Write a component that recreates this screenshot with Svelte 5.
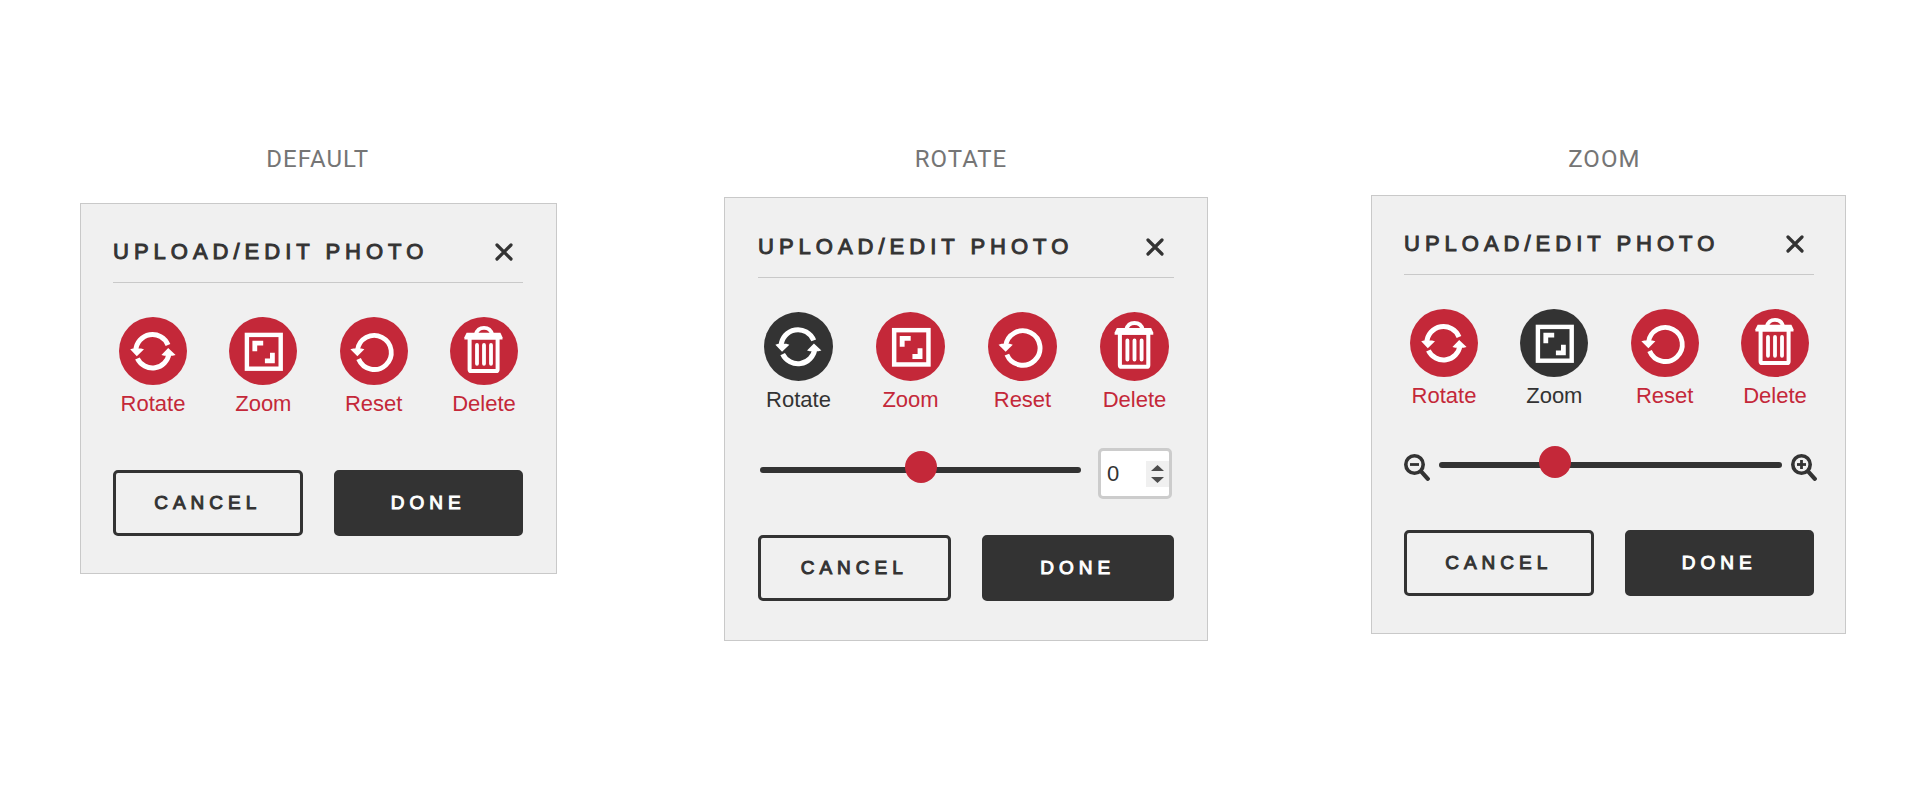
<script>
  const tools = [
    { id: 'rotate', label: 'Rotate' },
    { id: 'zoom', label: 'Zoom' },
    { id: 'reset', label: 'Reset' },
    { id: 'delete', label: 'Delete' }
  ];

  const panels = [
    { id: 'default', label: 'DEFAULT' },
    { id: 'rotate', label: 'ROTATE' },
    { id: 'zoom', label: 'ZOOM' }
  ];

  let angle = $state(0);
  let scale = $state(32);

  function turn(step) {
    angle = Math.max(-180, Math.min(180, Number(angle) + step));
  }
</script>

{#snippet toolIcon(id)}
  <svg class="dial" viewBox="0 0 68 68" aria-hidden="true">
    <circle cx="34" cy="34" r="34" fill="currentColor" />
    {#if id === 'rotate'}
      <g fill="none" stroke="#fff" stroke-width="5">
        <path d="M16.8 33.5A16.7 16.7 0 0 1 49 28" />
        <path d="M18.4 41.5A16.7 16.7 0 0 0 50 36.5" />
      </g>
      <path fill="#fff" d="M11.2 32.2L14 31.4H22L25 32.2L17.8 39.2ZM42.4 38L49.2 31L56.6 38L53.6 38.8H45.2Z" />
    {:else if id === 'zoom'}
      <rect x="17.9" y="17.9" width="33.8" height="33.8" fill="none" stroke="#fff" stroke-width="4.4" />
      <path fill="#fff" d="M23.4 23.7H34.2V28.4H28.2V34.2H23.4ZM45.8 35.7V46.2H35.9V41.5H41V35.7Z" />
    {:else if id === 'reset'}
      <path d="M18.6 42A17 17 0 1 0 17.4 33.5" fill="none" stroke="#fff" stroke-width="4.8" />
      <path fill="#fff" d="M10.4 32.2L13.4 31.4H21.4L24.4 32.2L17.4 39.2Z" />
    {:else}
      <path d="M25.8 17.5C27 12.8 30 10.8 34 10.8S41 12.8 42.2 17.5" fill="none" stroke="#fff" stroke-width="3.8" />
      <path fill="#fff" d="M16.6 15.8H50.4L52.5 20.3V22.4H14.4V20.3Z" />
      <rect x="19.6" y="20.5" width="28" height="33.5" rx="1.6" fill="none" stroke="#fff" stroke-width="4" />
      <path d="M27 28V46.8M34 28V46.8M41 28V46.8" stroke="#fff" stroke-width="3.8" stroke-linecap="round" />
    {/if}
  </svg>
{/snippet}

{#snippet magnifier(plus)}
  <svg class="lens" viewBox="0 0 26 27" fill="none" stroke="currentColor" aria-hidden="true">
    <circle cx="10.5" cy="10.5" r="8.7" stroke-width="3.6" />
    <path d="M6 10.5H15" stroke-width="2.8" />
    {#if plus}<path d="M10.5 6V15" stroke-width="2.8" />{/if}
    <path d="M17.3 17.6L23.8 24.8" stroke-width="4.2" stroke-linecap="round" />
  </svg>
{/snippet}

<main>
  <div class="states">
    {#each panels as p}
      <h2 id="state-{p.id}">{p.label}</h2>
    {/each}
  </div>

  <div class="panels">
    {#each panels as p}
      <section class="panel {p.id}" aria-labelledby="state-{p.id}">
        <header>
          <h3>UPLOAD/EDIT PHOTO</h3>
          <button class="close" type="button" aria-label="Close">
            <svg viewBox="0 0 18 18" aria-hidden="true">
              <path d="M2 2L16 16M16 2L2 16" stroke="currentColor" stroke-width="3.2" stroke-linecap="round" />
            </svg>
          </button>
        </header>

        <div class="tools">
          {#each tools as t}
            <button class="tool" class:active={t.id === p.id} type="button">
              {@render toolIcon(t.id)}
              <span>{t.label}</span>
            </button>
          {/each}
        </div>

        {#if p.id === 'rotate'}
          <div class="adjust">
            <input type="range" min="-180" max="180" bind:value={angle} aria-label="Rotation" />
            <div class="stepper">
              <input type="number" min="-180" max="180" bind:value={angle} aria-label="Rotation in degrees" />
              <div class="spin">
                <button type="button" aria-label="Increase" onclick={() => turn(1)}>
                  <svg viewBox="0 0 13 6" aria-hidden="true"><path d="M0 6L6.5 0L13 6Z" fill="currentColor" /></svg>
                </button>
                <button type="button" aria-label="Decrease" onclick={() => turn(-1)}>
                  <svg viewBox="0 0 13 6" aria-hidden="true"><path d="M0 0H13L6.5 6Z" fill="currentColor" /></svg>
                </button>
              </div>
            </div>
          </div>
        {:else if p.id === 'zoom'}
          <div class="adjust">
            {@render magnifier(false)}
            <input type="range" min="0" max="100" bind:value={scale} aria-label="Zoom level" />
            {@render magnifier(true)}
          </div>
        {/if}

        <footer>
          <button class="action" type="button">CANCEL</button>
          <button class="action filled" type="button">DONE</button>
        </footer>
      </section>
    {/each}
  </div>
</main>

<style>
  :global(body) {
    margin: 0;
    background: #fff;
  }

  main {
    --red: #c42839;
    --dark: #333;
    --line: #c9c9c9;
    padding: 143px 0 40px;
    color: var(--dark);
    font-family: 'Liberation Sans', Arial, sans-serif;
  }

  h2,
  h3 {
    margin: 0;
  }

  button {
    margin: 0;
    padding: 0;
    border: 0;
    background: none;
    color: inherit;
    font: inherit;
    cursor: pointer;
  }

  svg {
    display: block;
  }

  .states {
    display: grid;
    grid-template-columns: repeat(3, 1fr);
    column-gap: 168px;
    padding: 0 78px 0 80px;
  }

  h2 {
    color: #757575;
    font: 400 24px/32px Roboto, sans-serif;
    letter-spacing: 1px;
    text-align: center;
  }

  .panels {
    display: grid;
    grid-template-columns: 477fr 167fr 484fr 163fr 475fr;
    align-items: start;
    padding: 20px 74px 0 80px;
  }

  .panel {
    --dial: 68px;
    box-sizing: border-box;
    padding: 32px 32px 37px;
    border: 1px solid var(--line);
    background: #f0f0f0;
  }

  .panel.default {
    grid-column: 1;
    margin-top: 8px;
    padding-right: 33px;
  }

  .panel.rotate {
    --dial: 69px;
    grid-column: 3;
    margin-top: 2px;
    padding: 33px 33px 39px;
  }

  .panel.zoom {
    grid-column: 5;
    padding-right: 31px;
  }

  header {
    display: flex;
    align-items: center;
    justify-content: space-between;
    padding: 0 10px 14px 0;
    border-bottom: 1px solid var(--line);
  }

  /* A thin outline on the regular face gives a medium weight. */
  h3,
  .action {
    font-weight: 400;
    letter-spacing: 5px;
    -webkit-text-stroke: 1px currentColor;
  }

  h3 {
    font-size: 22px;
    line-height: 32px;
    white-space: nowrap;
  }

  .close svg {
    width: 18px;
    height: 18px;
  }

  .tools {
    display: flex;
    justify-content: space-between;
    padding: 34px 5px 0 6px;
  }

  .tool {
    display: flex;
    flex-direction: column;
    align-items: center;
    gap: 5px;
    width: var(--dial);
    color: var(--red);
    font-size: 22px;
    line-height: 28px;
  }

  .tool.active {
    color: var(--dark);
  }

  .dial {
    width: var(--dial);
    height: var(--dial);
  }

  .adjust {
    display: flex;
  }

  .rotate .adjust {
    gap: 17px;
    padding: 34px 2px 0;
  }

  .zoom .adjust {
    align-items: center;
    gap: 9px;
    margin-right: -3px;
    padding-top: 36px;
  }

  .lens {
    flex: none;
    width: 26px;
    height: 27px;
    padding-top: 4px;
  }

  input[type='range'] {
    flex: 1;
    min-width: 0;
    height: 38px;
    margin: 0;
    appearance: none;
    background: none;
  }

  .rotate input[type='range'] {
    height: 44px;
  }

  input[type='range']::-webkit-slider-runnable-track {
    height: 6px;
    border-radius: 3px;
    background: var(--dark);
  }

  input[type='range']::-webkit-slider-thumb {
    width: 32px;
    height: 32px;
    margin-top: -16px;
    border-radius: 50%;
    appearance: none;
    background: var(--red);
  }

  .stepper {
    display: flex;
    align-items: center;
    box-sizing: border-box;
    width: 74px;
    height: 51px;
    border: 3px solid #ccc;
    border-radius: 5px;
    background: #fff;
  }

  input[type='number'] {
    flex: 1;
    min-width: 0;
    margin: 0;
    padding: 0 0 0 6px;
    border: 0;
    appearance: textfield;
    background: none;
    color: var(--dark);
    font: 22px/28px 'Liberation Sans', Arial, sans-serif;
  }

  input[type='number']::-webkit-inner-spin-button {
    display: none;
  }

  .spin {
    display: flex;
    flex-direction: column;
    gap: 6px;
    padding: 4px 5px;
    background: #f0f0f0;
    color: #4d4d4d;
  }

  .spin svg {
    width: 13px;
    height: 6px;
  }

  footer {
    display: grid;
    grid-template-columns: 1fr 1fr;
    gap: 31px;
    padding-top: 52px;
  }

  .rotate footer {
    padding-top: 36px;
  }

  .zoom footer {
    padding-top: 46px;
  }

  .action {
    height: 66px;
    border: 3px solid var(--dark);
    border-radius: 5px;
    font-size: 19px;
    line-height: 24px;
  }

  .filled {
    background: var(--dark);
    color: #fff;
  }
</style>
